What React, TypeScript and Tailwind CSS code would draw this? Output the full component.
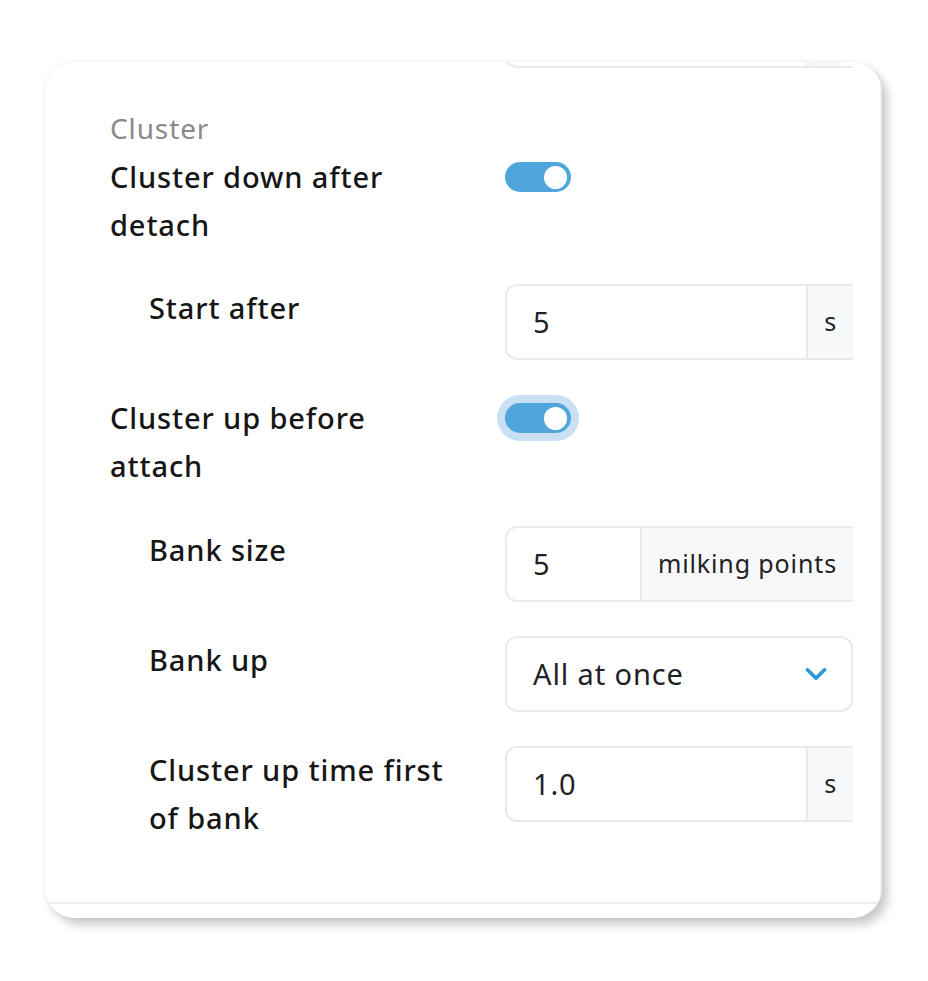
import { ChevronDown } from "lucide-react";

const font = { fontFamily: '"Noto Sans", "Open Sans", sans-serif' };

function Toggle({ focused }: { focused?: boolean }) {
  return (
    <div
      className={`mt-[9px] flex h-[30px] w-[66px] items-center justify-end rounded-full bg-[#4fa6da] pr-[4px] ${
        focused ? "ring-[8px] ring-[#c9dff3]" : ""
      }`}
    >
      <span className="h-[23px] w-[23px] rounded-full bg-white" />
    </div>
  );
}

function UnitInput({ value, unit, valueWidth }: { value: string; unit: string; valueWidth?: string }) {
  return (
    <div className="flex h-[76px] w-[348px] rounded-l-[12px] border-2 border-r-0 border-[#e8ebee] bg-white">
      <div className={`flex items-center pl-[26px] text-[29px] text-[#1e2226] ${valueWidth ?? "flex-1"}`}>{value}</div>
      <div className="flex items-center border-l-2 border-[#e8ebee] bg-[#f6f8fa] px-[16px] text-[25px] text-[#222]">
        {unit}
      </div>
    </div>
  );
}

function Row({
  label,
  indent,
  children,
  className,
}: {
  label: string[];
  indent?: boolean;
  children: React.ReactNode;
  className?: string;
}) {
  return (
    <div className={`grid grid-cols-[395px_348px] items-start ${className ?? ""}`}>
      <div className={`text-[29px] font-medium leading-[48px] text-[#161616] ${indent ? "pl-[39px]" : ""}`}>
        {label.map((l) => (
          <div key={l}>{l}</div>
        ))}
      </div>
      <div>{children}</div>
    </div>
  );
}

export default function App() {
  return (
    <div className="min-h-[981px] bg-white pt-[62px] pl-[45px] tracking-[0.055em]" style={font}>
      <div className="w-[837px] h-[856px] overflow-hidden rounded-[30px] bg-white shadow-[0_0_5px_rgba(0,0,0,0.07),6px_7px_10px_rgba(0,0,0,0.2)]">
        <div className="border-b-2 border-r-2 border-[#eceef0] pl-[65px] pb-[60px]">
          <div className="ml-[395px] mt-[-70px]">
            <UnitInput value="" unit="" valueWidth="w-[300px]" />
          </div>

          <div className="mt-[40px] text-[28px] leading-[40px] text-[#8a8a8a]">Cluster</div>

          <Row label={["Cluster down after", "detach"]} className="mt-[5px]">
            <Toggle />
          </Row>

          <Row label={["Start after"]} indent className="mt-[35px]">
            <UnitInput value="5" unit="s" />
          </Row>

          <Row label={["Cluster up before", "attach"]} className="mt-[34px]">
            <Toggle focused />
          </Row>

          <Row label={["Bank size"]} indent className="mt-[36px]">
            <UnitInput value="5" unit="milking points" />
          </Row>

          <Row label={["Bank up"]} indent className="mt-[34px]">
            <div className="flex h-[76px] w-[348px] items-center justify-between rounded-[12px] border-2 border-[#e8ebee] bg-white pl-[26px] pr-[18px] text-[29px] text-[#1e2226]">
              <span>All at once</span>
              <ChevronDown size={34} strokeWidth={2.6} className="text-[#2a9bd8]" />
            </div>
          </Row>

          <Row label={["Cluster up time first", "of bank"]} indent className="mt-[34px]">
            <UnitInput value="1.0" unit="s" />
          </Row>
        </div>
      </div>
    </div>
  );
}
